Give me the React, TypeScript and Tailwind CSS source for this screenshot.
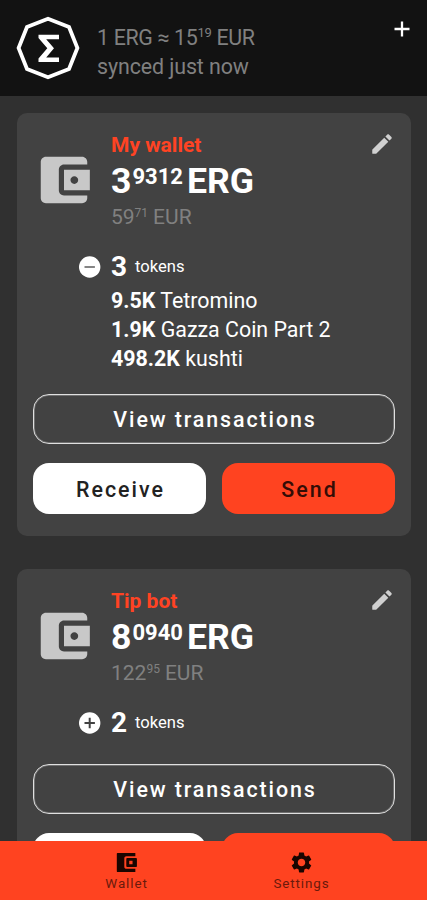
import React from 'react';
import { MdSettings } from 'react-icons/md';

interface IToken {
  amount: string;
  name: string;
}

interface IWallet {
  name: string;
  whole: string;
  decimals: string;
  fiatWhole: string;
  fiatDecimals: string;
  tokenCount: number;
  tokens: IToken[];
  expanded: boolean;
}

const wallets: IWallet[] = [
  {
    name: 'My wallet',
    whole: '3',
    decimals: '9312',
    fiatWhole: '59',
    fiatDecimals: '71',
    tokenCount: 3,
    expanded: true,
    tokens: [
      { amount: '9.5K', name: 'Tetromino' },
      { amount: '1.9K', name: 'Gazza Coin Part 2' },
      { amount: '498.2K', name: 'kushti' },
    ],
  },
  {
    name: 'Tip bot',
    whole: '8',
    decimals: '0940',
    fiatWhole: '122',
    fiatDecimals: '95',
    tokenCount: 2,
    expanded: false,
    tokens: [],
  },
];

const ErgoLogo: React.FC = () => (
  <svg className="w-16 h-16 shrink-0" viewBox="0 0 64 64" fill="none" stroke="#fff">
    <path d="M32 2.8 L53 11 L61.4 32 L53 53 L32 61.2 L11 53 L2.6 32 L11 11 Z" strokeWidth="3.8" />
    <path d="M43 18.7 H22.5 V22 L31.3 32.3 L22.5 42.5 V46 H43 V41.4 H30.2 L38 32.3 L30.2 23.3 H43 Z" fill="#fff" stroke="none" />
  </svg>
);

const AddIcon: React.FC<{ className: string }> = ({ className }) => (
  <svg className={className} viewBox="0 0 24 24" fill="none" stroke="currentColor">
    <path d="M4.5 12h15M12 4.5v15" strokeWidth="2.3" />
  </svg>
);

const WalletIcon: React.FC<{ className: string }> = ({ className }) => (
  <svg className={className} viewBox="0 0 24 24" fill="currentColor">
    <path d="M21 18v1c0 1.1-.9 2-2 2H5c-1.11 0-2-.9-2-2V5c0-1.1.89-2 2-2h14c1.1 0 2 .9 2 2v1h-9c-1.11 0-2 .9-2 2v8c0 1.1.89 2 2 2h9zm-9-2h10V8H12v8zm4-2.5c-.83 0-1.5-.67-1.5-1.5s.67-1.5 1.5-1.5 1.5.67 1.5 1.5-.67 1.5-1.5 1.5z" />
  </svg>
);

const WalletTabIcon: React.FC<{ className: string }> = ({ className }) => (
  <svg className={className} viewBox="0 0 24 24" fill="currentColor" fillRule="evenodd">
    <path d="M3.6 2.8H20.5V5.9H12c-1.3 0-2.1.8-2.1 2.1v8c0 1.3.8 2.1 2.1 2.1h8.5v3.1H3.6c-.5 0-.9-.4-.9-.9V3.7c0-.5.4-.9.9-.9zM12.6 7.7h8.6c.4 0 .8.4.8.8v7c0 .4-.4.8-.8.8h-8.6c-.4 0-.8-.4-.8-.8v-7c0-.4.4-.8.8-.8zM14.6 10.4v3.2h3.2v-3.2z" />
  </svg>
);

const EditIcon: React.FC<{ className: string }> = ({ className }) => (
  <svg className={className} viewBox="0 0 24 24" fill="currentColor">
    <path d="M3 17.46v3.04c0 .28.22.5.5.5h3.04c.13 0 .26-.05.35-.15L17.81 9.94l-3.75-3.75L3.15 17.1c-.1.1-.15.22-.15.36zM20.71 7.04c.39-.39.39-1.02 0-1.41l-2.34-2.34c-.39-.39-1.02-.39-1.41 0l-1.83 1.83 3.75 3.75 1.83-1.83z" />
  </svg>
);

const ToggleIcon: React.FC<{ expanded: boolean }> = ({ expanded }) => (
  <svg className="w-[22px] h-[22px] shrink-0" viewBox="0 0 22 22">
    <circle cx="10.7" cy="11" r="10.7" fill="#fff" />
    <path
      d={expanded ? 'M5.5 11h10.4' : 'M5.5 11h10.4M10.7 5.8v10.4'}
      stroke={expanded ? '#858585' : '#424242'}
      strokeWidth="2"
    />
  </svg>
);

const WalletCard: React.FC<{ wallet: IWallet }> = ({ wallet }) => {
  return (
    <section className="bg-[#424242] rounded-[10px] px-4 pt-[18px] pb-[22px]">
      <div className="flex items-start">
        <WalletIcon className="w-[62px] h-[62px] shrink-0 mt-[18px] text-[#c8c8c8]" />
        <div className="flex-1 ml-4">
          <h2 className="text-[21px] leading-[28px] font-bold text-[#ff4323]">{wallet.name}</h2>
          <p className="flex items-start h-[44px] text-[35.6px] leading-[45px] font-bold text-white">
            <span>{wallet.whole}</span>
            <span className="text-[22px] leading-[36px] ml-px">{wallet.decimals}</span>
            <span className="ml-[4px]">ERG</span>
          </p>
          <p className="flex items-start h-[28px] text-[21px] leading-[28px] text-[#808080]">
            <span>{wallet.fiatWhole}</span>
            <span className="text-[12px] leading-[20px]">{wallet.fiatDecimals}</span>
            <span className="ml-[5px]">EUR</span>
          </p>
        </div>
        <EditIcon className="w-[26px] h-[26px] text-[#d0d0d0]" />
      </div>
      <div className="flex items-center h-[34px] mt-[19px] ml-[46px] text-white">
        <ToggleIcon expanded={wallet.expanded} />
        <span className="ml-[10px] text-[28px] font-bold">{wallet.tokenCount}</span>
        <span className="ml-[8px] text-[16.6px]">tokens</span>
      </div>
      {wallet.expanded && (
        <ul className="mt-[2px] -mb-[3px] ml-[78px] text-[21.4px] leading-[29px] text-white">
          {wallet.tokens.map((token) => (
            <li key={token.name}>
              <span className="font-bold">{token.amount}</span> {token.name}
            </li>
          ))}
        </ul>
      )}
      <button className="block w-full h-[50px] mt-6 pl-[2px] pt-[3px] rounded-[16px] border border-[#e0e0e0] shadow-[inset_0_0_0_1px_#707070] text-[21.4px] font-medium tracking-[1.9px] text-white">
        View transactions
      </button>
      <div className="flex gap-4 mt-[19px] text-[21.4px] font-medium tracking-[2px]">
        <button className="flex-1 h-[51px] pl-[2px] pt-[3px] rounded-[16px] bg-white text-[#222222]">Receive</button>
        <button className="flex-1 h-[51px] pl-[2px] pt-[3px] rounded-[16px] bg-[#ff4320] text-[#350d06]">Send</button>
      </div>
    </section>
  );
};

const App: React.FC = () => {
  return (
    <div className="flex flex-col h-[900px] bg-[#303030] font-[Roboto,sans-serif] overflow-hidden">
      <header className="flex h-24 shrink-0 bg-[#121212] pt-4 pl-4 pr-[13px]">
        <ErgoLogo />
        <div className="flex-1 ml-[17px] mt-[7px] text-[21.4px] leading-[29px] tracking-[-0.1px] text-[#808080]">
          <p className="flex items-start tracking-[-0.35px]">
            <span>1 ERG ≈ 15</span>
            <span className="text-[13px] leading-[20px]">19</span>
            <span className="ml-[5px]">EUR</span>
          </p>
          <p>synced just now</p>
        </div>
        <AddIcon className="w-6 h-6 mt-[1px] text-white" />
      </header>
      <main className="flex flex-col flex-1 min-h-0 gap-[33px] pl-[17px] pr-4 pt-[17px] overflow-hidden">
        {wallets.map((wallet) => (
          <div key={wallet.name} className="shrink-0">
            <WalletCard wallet={wallet} />
          </div>
        ))}
      </main>
      <nav className="flex h-[59px] shrink-0 justify-center gap-[92px] bg-[#ff4320] pt-[9px] pl-px text-[13.4px] leading-[18px] tracking-[0.9px] text-[#6b1a0c]">
        <a className="flex flex-col items-center w-[83px]">
          <WalletTabIcon className="w-[25px] h-[25px] text-[#1a0500]" />
          Wallet
        </a>
        <a className="flex flex-col items-center w-[83px]">
          <MdSettings className="w-[25px] h-[25px] text-[#1a0500]" />
          Settings
        </a>
      </nav>
    </div>
  );
};

export default App;
